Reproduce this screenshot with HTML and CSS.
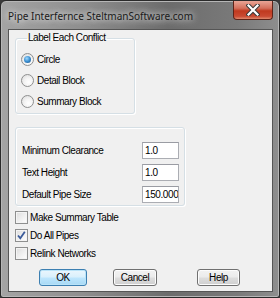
FILE: index.html
```html
<!DOCTYPE html>
<html>
<head>
<meta charset="utf-8">
<link rel="stylesheet" href="styles.css">
</head>
<body>
<div class="window">
  <div class="titlebar">
    <span class="title">Pipe Interfernce SteltmanSoftware.com</span>
    <div class="close">
      <svg width="14" height="12" viewBox="0 0 14 12">
        <path d="M2.5 1.5 L11.5 10.5 M11.5 1.5 L2.5 10.5" stroke="#3a3a3a" stroke-width="4.2" stroke-linecap="square" fill="none"/>
        <path d="M2.5 1.5 L11.5 10.5 M11.5 1.5 L2.5 10.5" stroke="#ffffff" stroke-width="2.2" stroke-linecap="square" fill="none"/>
      </svg>
    </div>
  </div>
  <div class="client">
    <fieldset class="group group-label">
      <legend class="legend">Label Each Conflict</legend>
      <div class="opt"><span class="radio checked"></span><span>Circle</span></div>
      <div class="opt"><span class="radio"></span><span>Detail Block</span></div>
      <div class="opt"><span class="radio"></span><span>Summary Block</span></div>
    </fieldset>
    <div class="group group-sizes">
      <span class="lbl">Minimum Clearance</span><span class="field">1.0</span>
      <span class="lbl">Text Height</span><span class="field">1.0</span>
      <span class="lbl">Default Pipe Size</span><span class="field">150.000</span>
    </div>
    <div class="checks">
      <div class="chk-row"><span class="chk"></span><span>Make Summary Table</span></div>
      <div class="chk-row"><span class="chk on"><svg width="11" height="11" viewBox="0 0 11 11"><path d="M2 5.5 L4.3 8.2 L8.8 1.8" stroke="#3b5b9a" stroke-width="1.8" fill="none"/></svg></span><span>Do All Pipes</span></div>
      <div class="chk-row"><span class="chk"></span><span>Relink Networks</span></div>
    </div>
    <div class="buttons">
      <div class="btn btn-ok">OK</div>
      <div class="btn btn-cancel">Cancel</div>
      <div class="btn btn-help">Help</div>
    </div>
  </div>
</div>
</body>
</html>
```

FILE: styles.css
```css
html, body {
  margin: 0;
  padding: 0;
  width: 280px;
  height: 298px;
  overflow: hidden;
  background: #3a3a3a;
}
.window {
  box-sizing: border-box;
  width: 280px;
  height: 298px;
  border: 1px solid #2a2a2a;
  border-radius: 6px 6px 3px 3px;
  padding: 0 6px 5px 7px;
  background: linear-gradient(90deg, #a4a4a4 0%, #8e8e8e 30%, #6c6c6c 60%, #7a7a7a 85%, #8e8e8e 100%);
  box-shadow: inset 0 0 0 1px #b6b6b6;
  display: flex;
  flex-direction: column;
}
.titlebar {
  height: 28px;
  display: flex;
  align-items: flex-start;
  justify-content: space-between;
}
.title {
  font-family: "Noto Sans", sans-serif;
  font-size: 10px;
  color: #1a1a1a;
  margin-top: 8px;
  padding: 0 4px 0 0;
  letter-spacing: 0;
  text-shadow: 0 0 6px rgba(255,255,255,0.9), 0 0 10px rgba(255,255,255,0.6);
}
.close {
  width: 40px;
  height: 19px;
  box-sizing: border-box;
  border: 1px solid #5e2318;
  border-top: none;
  border-radius: 0 0 4px 4px;
  background: linear-gradient(180deg, #e9a596 0%, #d4705c 40%, #c0391f 55%, #c94a32 85%, #e08a6e 100%);
  display: flex;
  align-items: center;
  justify-content: center;
}
.client {
  box-sizing: border-box;
  flex: 1;
  background: #f0f0f0;
  border: 1px solid #555;
  font-family: "Liberation Sans", Arial, sans-serif;
  font-size: 10px;
  letter-spacing: -0.45px;
  color: #000;
  padding: 2px 0 0 6px;
}
.group {
  border: 1px solid #d5dfe5;
  border-radius: 3px;
  box-shadow: inset 1px 1px 0 #fff, 1px 1px 0 #fff;
  margin: 0;
}
.group-label {
  width: 120px;
  box-sizing: border-box;
  padding: 5px 0 0 5px;
  height: 82px;
}
.legend {
  padding: 0 1px;
  margin-left: 6px;
  line-height: 12px;
}
.opt {
  height: 21px;
  display: flex;
  align-items: center;
  gap: 3px;
}
.radio {
  width: 13px;
  height: 13px;
  box-sizing: border-box;
  border-radius: 50%;
  border: 1px solid #8e8f8f;
  background: radial-gradient(circle at 60% 65%, #ffffff 0%, #f4f4f4 40%, #d9d9d9 100%);
  display: flex;
  align-items: center;
  justify-content: center;
}
.radio.checked::after {
  content: "";
  width: 7px;
  height: 7px;
  border-radius: 50%;
  background: radial-gradient(circle at 40% 35%, #9fd9ff 0%, #3b8fd0 50%, #1a4f86 100%);
}
.group-sizes {
  box-sizing: border-box;
  width: 170px;
  height: 79px;
  margin-top: 13px;
  padding: 14px 0 0 6px;
  display: grid;
  grid-template-columns: 120px 37px;
  grid-auto-rows: 17px;
  row-gap: 5px;
  align-items: center;
}
.field {
  box-sizing: border-box;
  height: 17px;
  width: 37px;
  background: #fff;
  border: 1px solid #abadb3;
  border-top-color: #9a9ca3;
  padding: 0 0 0 2px;
  line-height: 15px;
  white-space: nowrap;
  overflow: hidden;
  letter-spacing: -0.4px;
}
.checks {
  margin-top: 2px;
  display: flex;
  flex-direction: column;
}
.chk-row {
  height: 18px;
  display: flex;
  align-items: center;
  gap: 2px;
}
.chk {
  width: 13px;
  height: 13px;
  box-sizing: border-box;
  border: 1px solid #8e8f8f;
  background: linear-gradient(135deg, #dcdcdc 0%, #f2f2f2 60%, #ffffff 100%);
  box-shadow: inset 0 0 0 1px #f4f4f4;
  display: flex;
  align-items: center;
  justify-content: center;
}
.buttons {
  margin-top: 7px;
  display: flex;
}
.btn {
  box-sizing: border-box;
  height: 17px;
  border: 1px solid #707070;
  border-radius: 3px;
  background: linear-gradient(180deg, #f2f2f2 0%, #ebebeb 48%, #dddddd 52%, #cfcfcf 100%);
  box-shadow: inset 0 0 0 1px #fcfcfc;
  display: flex;
  align-items: center;
  justify-content: center;
}
.btn-ok {
  width: 48px;
  margin-left: 24px;
  border-color: #3c7fb1;
  background: linear-gradient(180deg, #eaf6fd 0%, #d9f0fc 48%, #bee6fd 52%, #a7d9f5 100%);
  box-shadow: inset 0 0 0 1px #b9e3f8;
}
.btn-cancel {
  width: 44px;
  margin-left: 26px;
}
.btn-help {
  width: 43px;
  margin-left: 40px;
}
```
